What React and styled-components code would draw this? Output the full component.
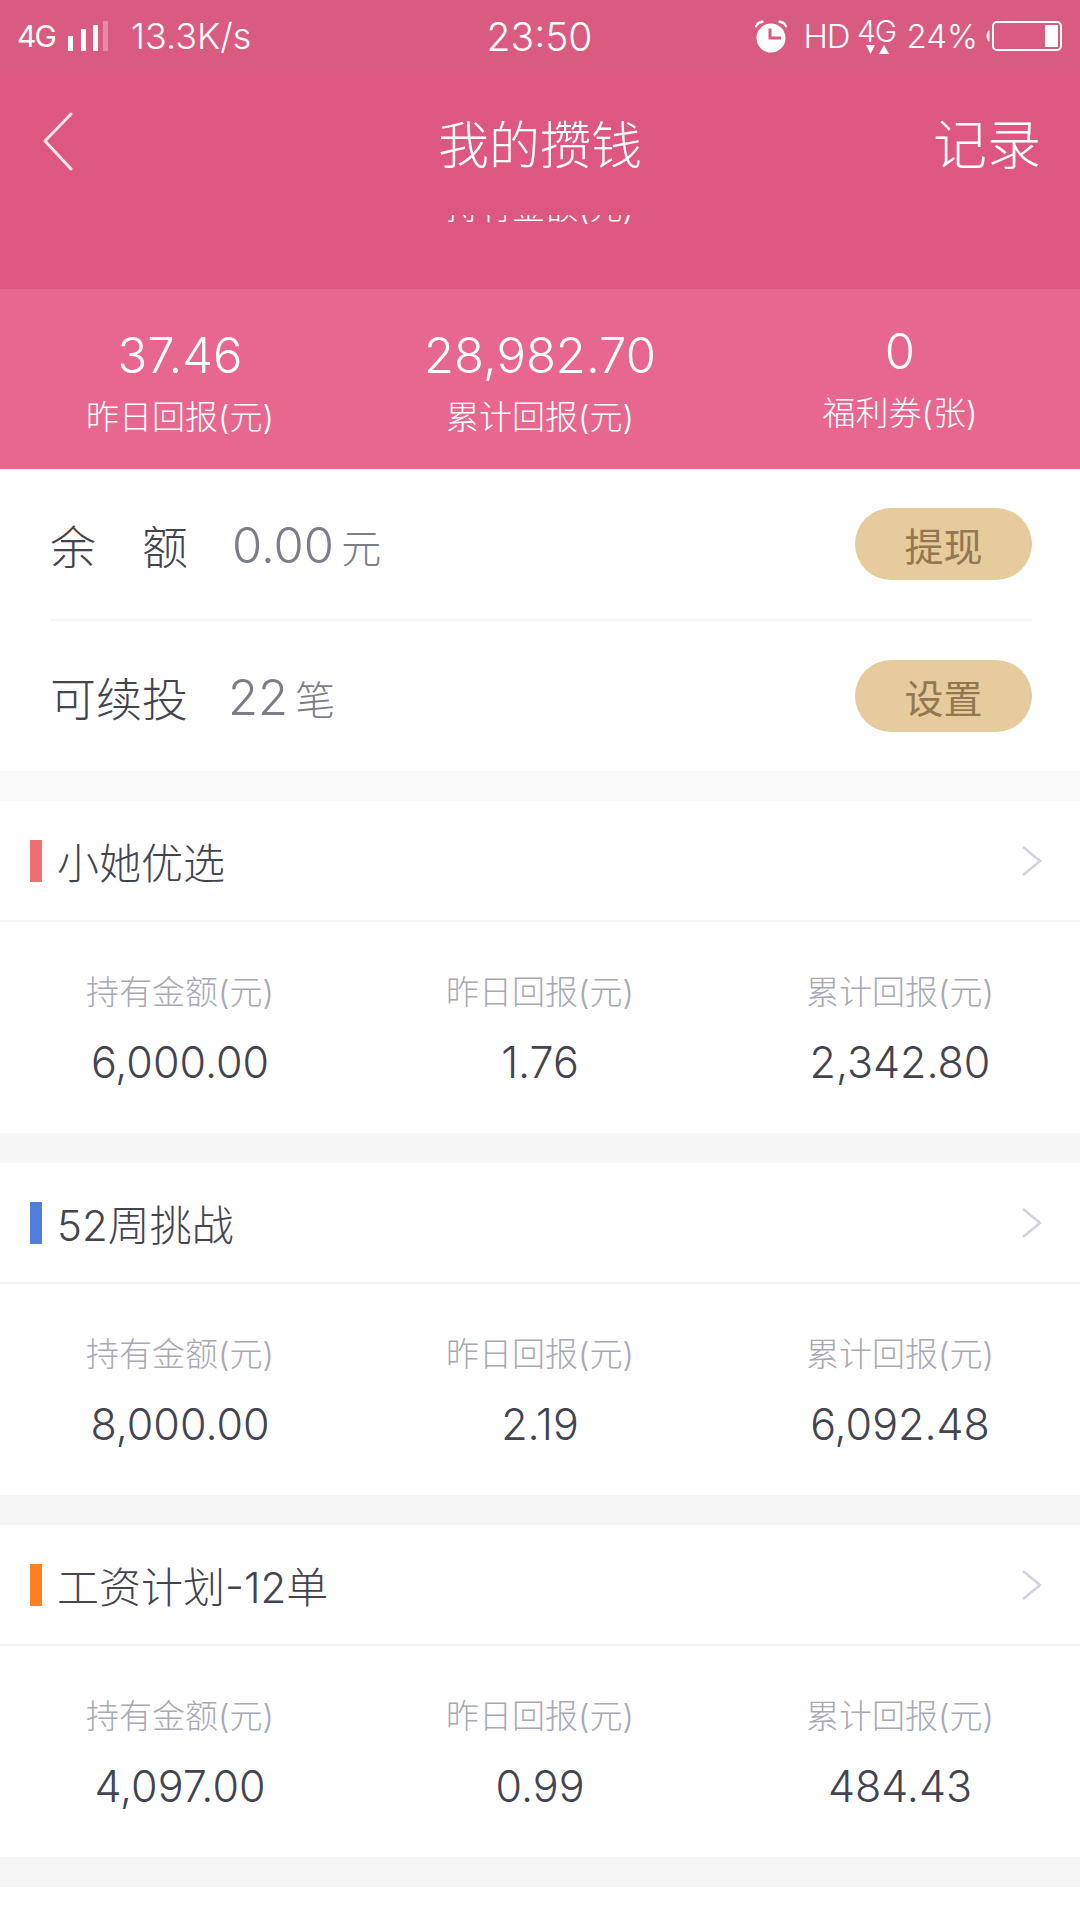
import styled, { createGlobalStyle } from "styled-components";

const CJK = `Inter, "Noto Sans CJK SC", sans-serif`;

const GlobalStyle = createGlobalStyle`
  html, body {
    margin: 0;
    padding: 0;
    background: #ffffff;
  }
  body {
    font-family: ${CJK};
  }
`;

const Page = styled.div`
  width: 1080px;
  height: 1920px;
  overflow: hidden;
  background: #ffffff;
`;

const Header = styled.header`
  background: #dd577f;
  color: #ffffff;
`;

const StatusBar = styled.div`
  height: 70px;
  padding: 2px 18px 0 17px;
  box-sizing: border-box;
  display: grid;
  grid-template-columns: 1fr auto 1fr;
  align-items: center;
  background: #d95b80;
  font-weight: 300;
`;

const StatusLeft = styled.div`
  display: flex;
  align-items: center;
`;

const StatusRight = styled.div`
  display: flex;
  align-items: center;
  justify-content: flex-end;
`;

const NetworkText = styled.span`
  font-size: 30px;
  font-weight: 400;
  letter-spacing: -2px;
`;

const Speed = styled.span`
  font-size: 36px;
  margin-left: 21px;
`;

const Clock = styled.span`
  font-size: 39px;
`;

const StatusText = styled.span`
  font-size: ${(p) => p.$size || 33}px;
  margin-left: ${(p) => p.$gap || 0}px;
  letter-spacing: ${(p) => p.$spacing || 0}px;
`;

const NavBar = styled.div`
  height: 145px;
  padding: 0 39px 2px;
  box-sizing: border-box;
  display: grid;
  grid-template-columns: 1fr auto 1fr;
  align-items: center;
`;

const BackButton = styled.svg`
  display: block;
  width: 30px;
  height: 60px;
  margin-left: 4px;
`;

const NavTitle = styled.div`
  font-size: 51px;
  font-weight: 300;
`;

const NavAction = styled.div`
  font-size: 54px;
  font-weight: 300;
  text-align: right;
`;

const ScrolledBand = styled.div`
  height: 74px;
  overflow: hidden;
  text-align: center;
`;

const ScrolledLabel = styled.div`
  margin-top: -29px;
  height: 42px;
  line-height: 42px;
  font-size: 33px;
  font-weight: 300;
  overflow: hidden;
`;

const StatsBand = styled.section`
  height: 180px;
  background: #e7678f;
  color: #ffffff;
  display: grid;
  grid-template-columns: repeat(3, 1fr);
  text-align: center;
`;

const StatCell = styled.div`
  padding-top: ${(p) => p.$top || 38}px;
`;

const StatValue = styled.div`
  font-size: 49px;
  line-height: 58px;
  font-weight: 300;
`;

const StatLabel = styled.div`
  font-size: 33px;
  line-height: 42px;
  margin-top: 11px;
  font-weight: 300;
`;

const BalanceSection = styled.section`
  padding: 0 48px 0 50px;
`;

const BalanceRow = styled.div`
  height: ${(p) => (p.$divided ? 152 : 150)}px;
  display: flex;
  align-items: center;
  border-bottom: ${(p) => (p.$divided ? "2px solid #f5f5f5" : "none")};
  box-sizing: border-box;
`;

const BalanceLabel = styled.div`
  width: ${(p) => p.$width}px;
  font-size: 46px;
  font-weight: 300;
  color: #43444f;
  white-space: pre;
`;

const BalanceValue = styled.div`
  padding-top: 3px;
  font-size: 49px;
  font-weight: 300;
  color: #7b7d89;
`;

const BalanceUnit = styled.span`
  font-size: 40px;
  margin-left: 7px;
`;

const PillButton = styled.button`
  margin-left: auto;
  width: 177px;
  height: 72px;
  border: none;
  border-radius: 36px;
  background: #e6cb9c;
  color: #937752;
  font-family: ${CJK};
  font-size: 39px;
  font-weight: 400;
  padding: 0;
`;

const Gap = styled.div`
  height: 30px;
  background: ${(p) => p.$color || "#f6f6f6"};
`;

const CardHeader = styled.div`
  height: 121px;
  box-sizing: border-box;
  padding: 0 37px 0 30px;
  display: flex;
  align-items: center;
  border-bottom: 2px solid #f3f3f3;
`;

const ColorBar = styled.span`
  width: 12px;
  height: 42px;
  background: ${(p) => p.$color};
`;

const CardTitle = styled.div`
  margin-left: 15px;
  font-size: 42px;
  font-weight: 300;
  color: #43444f;
`;

const Chevron = styled.svg`
  margin-left: auto;
  width: 22px;
  height: 32px;
`;

const CardStats = styled.div`
  height: 211px;
  display: grid;
  grid-template-columns: repeat(3, 1fr);
  text-align: center;
`;

const CardCell = styled.div`
  padding-top: 48px;
`;

const CardLabel = styled.div`
  font-size: 33px;
  line-height: 44px;
  font-weight: 300;
  color: #a8a9b5;
`;

const CardValue = styled.div`
  font-size: 43px;
  line-height: 52px;
  margin-top: 22px;
  font-weight: 300;
  color: #43444f;
`;

const NetworkStack = styled.span`
  margin-left: 8px;
  width: 38px;
  display: flex;
  flex-direction: column;
  align-items: center;
`;

const NetworkGlyph = styled.span`
  font-size: 30px;
  line-height: 28px;
  letter-spacing: -1px;
`;

const SignalBars = () => (
  <svg width="42" height="32" viewBox="0 0 42 32" style={{ marginLeft: 13 }}>
    <rect x="0" y="16" width="5" height="15" fill="#fff" />
    <rect x="13" y="9" width="5" height="22" fill="#fff" />
    <rect x="25" y="5" width="5" height="26" fill="#fff" />
    <rect x="35" y="1" width="5" height="30" fill="#fff" opacity="0.3" />
  </svg>
);

const AlarmIcon = () => (
  <svg width="34" height="34" viewBox="0 0 34 34">
    <circle cx="17" cy="19" r="14.5" fill="#fff" />
    <path d="M16 9.500V19h11" fill="none" stroke="#d95b80" strokeWidth="3" />
    <path d="M1 7.500 C2 3.500 5 1.500 9 1.500 L10 3.500 C6.500 4 3.500 6 2 9Z" fill="#fff" />
    <path d="M33 7.500 C32 3.500 29 1.500 25 1.500 L24 3.500 C27.500 4 30.500 6 32 9Z" fill="#fff" />
  </svg>
);

const NetworkIcon = () => (
  <NetworkStack>
    <NetworkGlyph>4G</NetworkGlyph>
    <svg width="26" height="10" viewBox="0 0 26 10">
      <path d="M2 0h9L6.500 9z" fill="#fff" />
      <path d="M20 0l5 9h-10z" fill="#fff" />
    </svg>
  </NetworkStack>
);

const BatteryIcon = () => (
  <svg width="76" height="32" viewBox="0 0 76 32" style={{ marginLeft: 8 }}>
    <path d="M3.500 10 C1 11.500 0.500 14 0.500 16 S1 20.500 3.500 22Z" fill="#fff" opacity="0.9" />
    <rect x="7" y="2" width="68" height="28" rx="4" fill="none" stroke="#fff" strokeWidth="2" />
    <rect x="59" y="5" width="13" height="22" fill="#fff" />
  </svg>
);

const BackIcon = () => (
  <BackButton viewBox="0 0 30 60">
    <path d="M28 2 L2 29 L28 57" fill="none" stroke="#ffffff" strokeOpacity="0.85" strokeWidth="3" strokeLinecap="round" strokeLinejoin="round" />
  </BackButton>
);

const products = [
  { title: "小她优选", color: "#ec7070", held: "6,000.00", yesterday: "1.76", total: "2,342.80" },
  { title: "52周挑战", color: "#4f7edc", held: "8,000.00", yesterday: "2.19", total: "6,092.48" },
  { title: "工资计划-12单", color: "#fb8022", held: "4,097.00", yesterday: "0.99", total: "484.43" },
];

const ProductCard = ({ title, color, held, yesterday, total }) => (
  <>
    <CardHeader>
      <ColorBar $color={color} />
      <CardTitle>{title}</CardTitle>
      <Chevron viewBox="0 0 22 32">
        <path d="M2 2 L19 16 L2 30" fill="none" stroke="#d3d3dd" strokeWidth="2.500" />
      </Chevron>
    </CardHeader>
    <CardStats>
      <CardCell>
        <CardLabel>持有金额(元)</CardLabel>
        <CardValue>{held}</CardValue>
      </CardCell>
      <CardCell>
        <CardLabel>昨日回报(元)</CardLabel>
        <CardValue>{yesterday}</CardValue>
      </CardCell>
      <CardCell>
        <CardLabel>累计回报(元)</CardLabel>
        <CardValue>{total}</CardValue>
      </CardCell>
    </CardStats>
    <Gap />
  </>
);

const App = () => {
  return (
    <Page>
      <GlobalStyle />
      <Header>
        <StatusBar>
          <StatusLeft>
            <NetworkText>4G</NetworkText>
            <SignalBars />
            <Speed>13.3K/s</Speed>
          </StatusLeft>
          <Clock>23:50</Clock>
          <StatusRight>
            <AlarmIcon />
            <StatusText $gap={15} $spacing={-1}>HD</StatusText>
            <NetworkIcon />
            <StatusText $gap={11}>24%</StatusText>
            <BatteryIcon />
          </StatusRight>
        </StatusBar>
        <NavBar>
          <BackIcon />
          <NavTitle>我的攒钱</NavTitle>
          <NavAction>记录</NavAction>
        </NavBar>
        <ScrolledBand>
          <ScrolledLabel>持有金额(元)</ScrolledLabel>
        </ScrolledBand>
      </Header>
      <StatsBand>
        <StatCell>
          <StatValue>37.46</StatValue>
          <StatLabel>昨日回报(元)</StatLabel>
        </StatCell>
        <StatCell>
          <StatValue>28,982.70</StatValue>
          <StatLabel>累计回报(元)</StatLabel>
        </StatCell>
        <StatCell $top={34}>
          <StatValue>0</StatValue>
          <StatLabel>福利券(张)</StatLabel>
        </StatCell>
      </StatsBand>
      <BalanceSection>
        <BalanceRow $divided>
          <BalanceLabel $width={182}>余　额</BalanceLabel>
          <BalanceValue>
            0.00<BalanceUnit>元</BalanceUnit>
          </BalanceValue>
          <PillButton>提现</PillButton>
        </BalanceRow>
        <BalanceRow>
          <BalanceLabel $width={178}>可续投</BalanceLabel>
          <BalanceValue>
            22<BalanceUnit>笔</BalanceUnit>
          </BalanceValue>
          <PillButton>设置</PillButton>
        </BalanceRow>
      </BalanceSection>
      <Gap $color="#f9f9f9" />
      {products.map((product) => (
        <ProductCard key={product.title} {...product} />
      ))}
    </Page>
  );
};

export default App;
